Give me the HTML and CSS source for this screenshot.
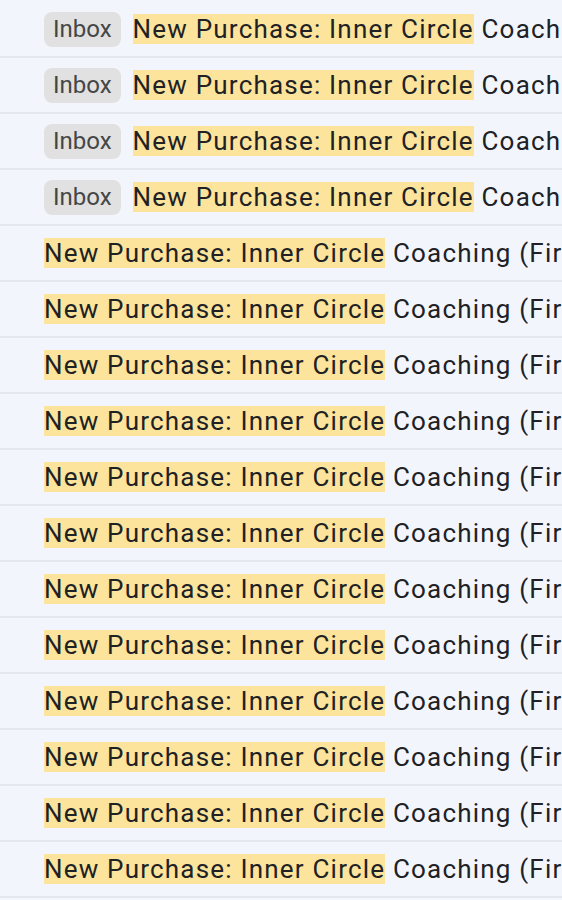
FILE: index.html
```html
<!DOCTYPE html>
<html lang="en">
<head>
    <meta charset="UTF-8">
    <meta name="viewport" content="width=device-width, initial-scale=1.0">
    <title>Search results</title>
    <link rel="stylesheet" href="styles.css">
</head>
<body>

<div class="mail-list">
    <!-- rows that still carry the Inbox label -->
    <div class="mail-row">
        <span class="chip">Inbox</span>
        <span class="subject"><mark>New Purchase: Inner Circle</mark> Coaching (First Month)</span>
    </div>
    <div class="mail-row">
        <span class="chip">Inbox</span>
        <span class="subject"><mark>New Purchase: Inner Circle</mark> Coaching (First Month)</span>
    </div>
    <div class="mail-row">
        <span class="chip">Inbox</span>
        <span class="subject"><mark>New Purchase: Inner Circle</mark> Coaching (First Month)</span>
    </div>
    <div class="mail-row">
        <span class="chip">Inbox</span>
        <span class="subject"><mark>New Purchase: Inner Circle</mark> Coaching (First Month)</span>
    </div>

    <!-- archived rows -->
    <div class="mail-row">
        <span class="subject"><mark>New Purchase: Inner Circle</mark> Coaching (First Month)</span>
    </div>
    <div class="mail-row">
        <span class="subject"><mark>New Purchase: Inner Circle</mark> Coaching (First Month)</span>
    </div>
    <div class="mail-row">
        <span class="subject"><mark>New Purchase: Inner Circle</mark> Coaching (First Month)</span>
    </div>
    <div class="mail-row">
        <span class="subject"><mark>New Purchase: Inner Circle</mark> Coaching (First Month)</span>
    </div>
    <div class="mail-row">
        <span class="subject"><mark>New Purchase: Inner Circle</mark> Coaching (First Month)</span>
    </div>
    <div class="mail-row">
        <span class="subject"><mark>New Purchase: Inner Circle</mark> Coaching (First Month)</span>
    </div>
    <div class="mail-row">
        <span class="subject"><mark>New Purchase: Inner Circle</mark> Coaching (First Month)</span>
    </div>
    <div class="mail-row">
        <span class="subject"><mark>New Purchase: Inner Circle</mark> Coaching (First Month)</span>
    </div>
    <div class="mail-row">
        <span class="subject"><mark>New Purchase: Inner Circle</mark> Coaching (First Month)</span>
    </div>
    <div class="mail-row">
        <span class="subject"><mark>New Purchase: Inner Circle</mark> Coaching (First Month)</span>
    </div>
    <div class="mail-row">
        <span class="subject"><mark>New Purchase: Inner Circle</mark> Coaching (First Month)</span>
    </div>
    <div class="mail-row">
        <span class="subject"><mark>New Purchase: Inner Circle</mark> Coaching (First Month)</span>
    </div>
</div>

</body>
</html>
```

FILE: styles.css
```css
body {
    margin: 0;
    background: #f2f6fc;
    font-family: Roboto, "Liberation Sans", Arial, sans-serif;
    color: #202124;
    overflow: hidden;
}
.mail-list {
    padding-top: 2px;
}
.mail-row {
    display: flex;
    align-items: center;
    gap: 12px;
    height: 56px;
    box-sizing: border-box;
    padding-left: 44px;
    border-bottom: 2px solid #e3e7ee;
    white-space: nowrap;
    overflow: hidden;
}
.chip {
    flex: none;
    background: #e1e1e1;
    color: #444746;
    font-size: 24px;
    line-height: 35px;
    padding: 0 9px;
    border-radius: 8px;
}
.subject {
    font-size: 26px;
    line-height: 35px;
    letter-spacing: 1.2px;
    padding-top: 1px;
}
.subject mark {
    background: #fce49c;
    color: inherit;
}
```
